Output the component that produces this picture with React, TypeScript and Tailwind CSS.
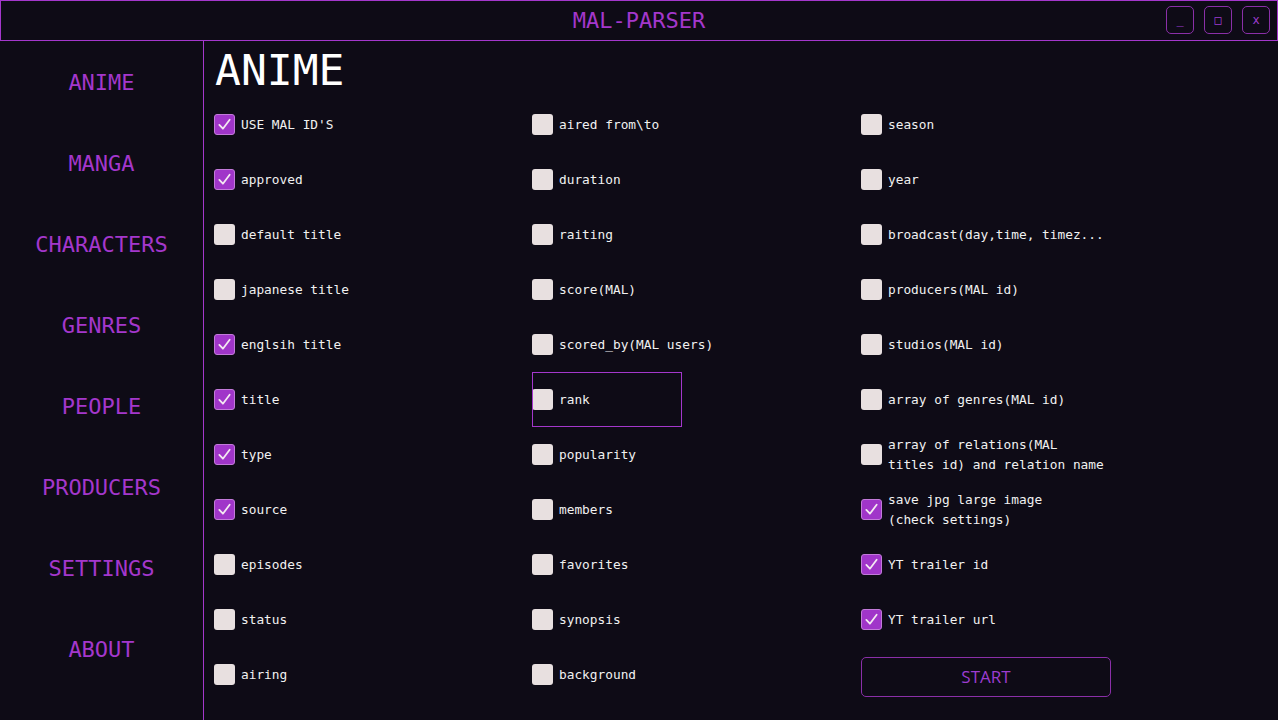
import { useState } from 'react';

const NAV = ['ANIME', 'MANGA', 'CHARACTERS', 'GENRES', 'PEOPLE', 'PRODUCERS', 'SETTINGS', 'ABOUT'];

type Opt = { label: string; on?: boolean };

const COL1: Opt[] = [
  { label: "USE MAL ID'S", on: true },
  { label: 'approved', on: true },
  { label: 'default title' },
  { label: 'japanese title' },
  { label: 'englsih title', on: true },
  { label: 'title', on: true },
  { label: 'type', on: true },
  { label: 'source', on: true },
  { label: 'episodes' },
  { label: 'status' },
  { label: 'airing' },
];

const COL2: Opt[] = [
  { label: 'aired from\\to' },
  { label: 'duration' },
  { label: 'raiting' },
  { label: 'score(MAL)' },
  { label: 'scored_by(MAL users)' },
  { label: 'rank' },
  { label: 'popularity' },
  { label: 'members' },
  { label: 'favorites' },
  { label: 'synopsis' },
  { label: 'background' },
];

const COL3: Opt[] = [
  { label: 'season' },
  { label: 'year' },
  { label: 'broadcast(day,time, timez...' },
  { label: 'producers(MAL id)' },
  { label: 'studios(MAL id)' },
  { label: 'array of genres(MAL id)' },
  { label: 'array of relations(MAL\ntitles id) and relation name' },
  { label: 'save jpg large image\n(check settings)', on: true },
  { label: 'YT trailer id', on: true },
  { label: 'YT trailer url', on: true },
];

function Check({ opt, focused }: { opt: Opt; focused?: boolean }) {
  const [on, setOn] = useState(!!opt.on);
  return (
    <label
      className={`relative flex h-[55px] items-center gap-[6px] cursor-pointer ${focused ? 'w-[150px]' : ''}`}
      onClick={() => setOn(!on)}
    >
      {focused && <span className="absolute inset-0 border border-[#a437cc] pointer-events-none" />}
      <span
        className={`flex h-[21px] w-[21px] shrink-0 items-center justify-center rounded-[3px] ${
          on ? 'bg-[#a035c9] border border-[#c27ad9]' : 'bg-[#e8e0e0]'
        }`}
      >
        {on && (
          <svg viewBox="0 0 16 16" className="h-[15px] w-[15px]" fill="none">
            <path d="M2.5 8.5 L6.3 12.5 L13.5 3" stroke="#f4e9f2" strokeWidth="1.9" strokeLinecap="round" strokeLinejoin="round" />
          </svg>
        )}
      </span>
      <span className="whitespace-pre leading-[20px] text-[12.8px] text-[#f1f1f1]">{opt.label}</span>
    </label>
  );
}

export default function App() {
  const [active] = useState('ANIME');
  return (
    <div
      className="flex h-[720px] w-[1278px] flex-col overflow-hidden bg-[#0e0b16] text-white"
      style={{ fontFamily: '"DejaVu Sans Mono", "Liberation Mono", monospace' }}
    >
      {/* title bar */}
      <header className="relative flex h-[41px] shrink-0 items-center justify-center border border-[#a437cc]">
        <span className="text-[22px] text-[#a437cc]">MAL-PARSER</span>
        <div className="absolute right-[7px] top-[5px] flex gap-[10px]">
          {['_', '□', 'x'].map((c) => (
            <button
              key={c}
              className="flex h-[28px] w-[28px] items-center justify-center rounded-[5px] border border-[#8a2fa8] text-[12px] text-[#9d3cd0]"
            >
              {c}
            </button>
          ))}
        </div>
      </header>

      <div className="flex min-h-0 flex-1">
        {/* sidebar */}
        <nav className="flex w-[204px] shrink-0 flex-col border-r border-[#a437cc] pt-[1px]">
          {NAV.map((n) => (
            <a
              key={n}
              className={`flex h-[81px] items-center justify-center text-[22px] ${
                n === active ? 'text-[#a437cc]' : 'text-[#a437cc]'
              }`}
            >
              {n}
            </a>
          ))}
        </nav>

        {/* content */}
        <main className="flex-1 pl-[10px]">
          <h1 className="flex h-[56px] items-center pl-[1px] pt-[2px] text-[43px] leading-none text-white">ANIME</h1>
          <div className="flex">
            <div className="flex w-[318px] flex-col">
              {COL1.map((o) => (
                <Check key={o.label} opt={o} />
              ))}
            </div>
            <div className="flex w-[329px] flex-col">
              {COL2.map((o) => (
                <Check key={o.label} opt={o} focused={o.label === 'rank'} />
              ))}
            </div>
            <div className="flex flex-col">
              {COL3.map((o) => (
                <Check key={o.label} opt={o} />
              ))}
              <div className="flex h-[55px] items-center">
                <button
                  className="mt-[5px] h-[40px] w-[250px] rounded-[5px] border border-[#8a2fa8] text-[17px] text-[#9d3cd0]"
                  style={{ fontFamily: '"Open Sans", "Noto Sans", sans-serif' }}
                >
                  START
                </button>
              </div>
            </div>
          </div>
        </main>
      </div>
    </div>
  );
}
